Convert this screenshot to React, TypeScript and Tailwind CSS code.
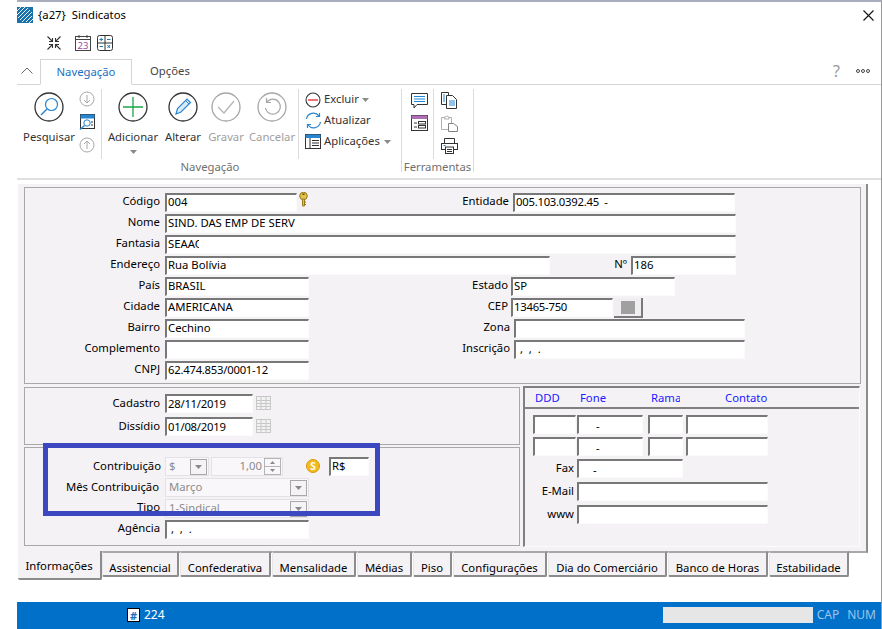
import type { ReactNode } from "react";
import { clsx } from "clsx";

const INPUT =
  "box-border h-[19px] shrink-0 overflow-hidden whitespace-pre border-t-2 border-l-2 border-r border-b border-t-[#787878] border-l-[#787878] border-r-[#fbfbfb] border-b-[#fbfbfb] bg-white pl-[1px] text-[11.3px] leading-[14px] text-black";

function Input({ className, children }: { className: string; children?: ReactNode }) {
  return <div className={clsx(INPUT, className)}>{children}</div>;
}

function Label({ className, children }: { className: string; children: ReactNode }) {
  return (
    <div className={clsx("h-[19px] shrink-0 whitespace-nowrap text-right text-[11.3px] leading-[16px] text-black", className)}>
      {children}
    </div>
  );
}

function Caret({ className }: { className?: string }) {
  return (
    <svg width="7" height="4" viewBox="0 0 7 4" className={className}>
      <path d="M0 0h7L3.5 4z" fill="#8a8a8a" />
    </svg>
  );
}

function Combo({ className, text }: { className: string; text: string }) {
  return (
    <div className={clsx("box-border flex h-[19px] shrink-0 items-center justify-between border border-[#e4e2e6] bg-[#f9f7fa] pl-[3px] pr-[1px] text-[11.3px] text-[#8c8c8c]", className)}>
      <span>{text}</span>
      <div className="flex h-[16px] w-[17px] items-center justify-center border border-[#a8a8a8] bg-[#f5f3f6]">
        <Caret />
      </div>
    </div>
  );
}

function CircleIcon({ children, muted }: { children: ReactNode; muted?: boolean }) {
  return (
    <svg width="30" height="30" viewBox="0 0 30 30" fill="none">
      <circle cx="15" cy="15" r="14" stroke={muted ? "#a6a6a6" : "#333333"} strokeWidth="1.3" />
      {children}
    </svg>
  );
}

function BigButton({ icon, text, className, muted, caret }: { icon: ReactNode; text: string; className: string; muted?: boolean; caret?: boolean }) {
  return (
    <div className={clsx("flex shrink-0 flex-col items-center pt-[3px]", className)}>
      {icon}
      <div className={clsx("mt-[6px] whitespace-nowrap text-[11.3px] leading-[18px]", muted ? "text-[#a0a0a0]" : "text-[#333333]")}>{text}</div>
      {caret && <Caret className="mt-[4px]" />}
    </div>
  );
}

function SmallCircle({ up }: { up?: boolean }) {
  return (
    <svg width="16" height="16" viewBox="0 0 16 16" fill="none" stroke="#a8a8a8" strokeWidth="1">
      <circle cx="8" cy="8" r="7" />
      {up ? <path d="M8 12V4M5 7l3-3 3 3" /> : <path d="M8 4v8M5 9l3 3 3-3" />}
    </svg>
  );
}

function CommandRow({ icon, text, caret }: { icon: ReactNode; text: string; caret?: string }) {
  return (
    <div className="flex h-[21px] items-center whitespace-nowrap text-[11.3px] text-[#333333]">
      <div className="flex w-[18px] justify-center">{icon}</div>
      <span className="ml-[2px]">{text}</span>
      {caret && <Caret className={caret} />}
    </div>
  );
}

function Tab({ className, children }: { className: string; children: string }) {
  return (
    <div className={clsx("box-border flex h-[26px] shrink-0 items-center justify-center rounded-b-[2px] border-t-2 border-l border-r-2 border-b-2 border-t-[#a8a8a8] border-l-[#e8e8e8] border-r-[#8c8c8c] border-b-[#8c8c8c] bg-[#f5f2f6] pt-[8px] text-[11.3px] text-black", className)}>
      {children}
    </div>
  );
}

function CalendarGrid() {
  return (
    <svg width="15" height="14" viewBox="0 0 15 14" className="ml-[3px] mt-[2px] shrink-0" fill="#f2f2f2" stroke="#c8c8c8">
      <rect x="0.5" y="0.5" width="14" height="13" />
      <path d="M0 4.5h15M0 7.5h15M0 10.5h15M5 1v13M10 1v13" />
    </svg>
  );
}

function Row({ children }: { children: ReactNode }) {
  return <div className="flex h-[21px] items-start">{children}</div>;
}

export default function App() {
  return (
    <div className="flex h-[629px] w-[882px] overflow-hidden bg-white font-['Noto_Sans','Open_Sans',sans-serif]">
      <div className="relative ml-[17px] flex h-full w-[865px] flex-col border-t-2 border-r border-t-[#a9adbd] border-r-[#9a9a9a]">
        {/* title */}
        <div className="flex h-[31px] shrink-0 items-center justify-between pr-[7px] pb-[5px]">
          <div className="flex items-center">
            <svg width="16" height="16" viewBox="0 0 16 16">
              <rect width="16" height="16" fill="#1a72ad" />
              <path d="M-1 5L5-1M-1 9L9-1M1 11L11 1M3 13L13 3M5 15L15 5M9 15l6-6M11 17l6-6" stroke="#fff" strokeWidth="0.9" />
            </svg>
            <span className="ml-[5px] text-[11.3px] text-black">{"{a27}"}</span>
            <span className="ml-[6px] text-[11.3px] text-black">Sindicatos</span>
          </div>
          <svg width="11" height="11" viewBox="0 0 11 11" stroke="#111" strokeWidth="1.1">
            <path d="M0.5 0.5l10 10M10.5 0.5l-10 10" />
          </svg>
        </div>

        {/* quick access */}
        <div className="flex h-[26px] shrink-0 items-center gap-[7px] pl-[30px] pb-[6px]">
          <svg width="14" height="14" viewBox="0 0 14 14" fill="none" stroke="#333" strokeWidth="1.1" className="mr-[2px]">
            <path d="M0.5 0.5L5.5 5.5M2 5.5h3.5V2M13.5 0.5L8.500 5.500M12 5.5H8.500V2M0.5 13.5L5.500 8.500M2 8.500h3.500V12M13.500 13.500L8.500 8.500M12 8.500H8.500V12" />
          </svg>
          <svg width="16" height="16" viewBox="0 0 16 16" fill="none" className="ml-[5px]">
            <rect x="0.5" y="1.500" width="15" height="14" stroke="#444" fill="#fff" />
            <path d="M0.500 4.500h15M4 0v3M12 0v3" stroke="#444" />
            <text x="8" y="13.500" textAnchor="middle" fontSize="9.500" fill="#a0479f" fontFamily="Noto Sans">23</text>
          </svg>
          <svg width="16" height="16" viewBox="0 0 16 16" fill="none" className="-ml-[1px]">
            <rect x="0.500" y="0.500" width="15" height="15" rx="2" stroke="#333" />
            <path d="M8 1v14M1 8h14" stroke="#333" />
            <path d="M2.500 4.500h3.500M4.200 2.800v3.400M10 4.500h3.500M2.500 11.500h3.500M10.500 10l2.500 3M13 10l-2.500 3" stroke="#1f78b4" />
          </svg>
        </div>

        {/* ribbon tabs */}
        <div className="flex h-[26px] shrink-0 items-end border-b border-b-[#d4d4d4]">
          <svg width="12" height="7" viewBox="0 0 12 7" fill="none" stroke="#666" className="mb-[10px] ml-[4px] mr-[7px]">
            <path d="M0.500 6.500L6 1l5.500 5.500" />
          </svg>
          <div className="-mb-px flex h-[26px] w-[92px] items-center justify-center border border-b-white border-[#d4d4d4] bg-white text-[11.3px] text-[#1c70c0]">
            Navegação
          </div>
          <div className="ml-[18px] pb-[3px] text-[11.3px] leading-[20px] text-[#444444]">Opções</div>
          <div className="ml-auto mb-[3px] mr-[16px] text-[16px] leading-[20px] text-[#9a9a9a]">?</div>
          <div className="mb-[11px] mr-[11px] flex gap-[1px]">
            <div className="h-[4px] w-[4px] rounded-full border border-[#444444]" />
            <div className="h-[4px] w-[4px] rounded-full border border-[#444444]" />
            <div className="h-[4px] w-[4px] rounded-full border border-[#444444]" />
          </div>
        </div>

        {/* ribbon */}
        <div className="flex h-[95px] shrink-0 border-b-2 border-b-[#e0e0e0] pt-[4px]">
          <div className="flex h-[83px] w-[385px] flex-col border-r border-r-[#dcdcdc]">
            <div className="flex h-[70px] shrink-0">
              <div className="flex w-[85px] border-r border-r-[#dcdcdc]">
                <BigButton
                  className="w-[61px] pl-[3px]"
                  text="Pesquisar"
                  icon={
                    <CircleIcon>
                      <circle cx="17.500" cy="12.500" r="6" stroke="#2a85d0" strokeWidth="1.200" />
                      <path d="M13 17l-6 6" stroke="#2a85d0" strokeWidth="1.500" />
                    </CircleIcon>
                  }
                />
                <div className="flex w-[18px] flex-col items-center gap-[7px] pt-[2px]">
                  <SmallCircle />
                  <svg width="16" height="16" viewBox="0 0 16 16" fill="none">
                    <rect x="1.500" y="0.500" width="14" height="14" stroke="#333" fill="#fff" />
                    <rect x="1.500" y="0.500" width="14" height="4" fill="#2a85d0" />
                    <circle cx="8" cy="9" r="3.200" stroke="#2a85d0" />
                    <path d="M5.500 11.500L1 15.500" stroke="#2a85d0" strokeWidth="1.300" />
                    <path d="M12 8h2M12 11h2" stroke="#333" />
                  </svg>
                  <SmallCircle up />
                </div>
              </div>
              <div className="flex w-[197px] border-r border-r-[#dcdcdc]">
                <BigButton
                  caret
                  className="w-[62px]"
                  text="Adicionar"
                  icon={
                    <CircleIcon>
                      <path d="M15 5v20M5 15h20" stroke="#1aa64a" strokeWidth="1.300" />
                    </CircleIcon>
                  }
                />
                <BigButton
                  className="ml-[2px] w-[34px]"
                  text="Alterar"
                  icon={
                    <CircleIcon>
                      <path d="M8 22l1.500-5.500L19 7l3.500 3.500L13 20z" stroke="#2a85d0" strokeWidth="1.200" fill="#d9eaf8" />
                      <path d="M17.500 8.500L21 12" stroke="#2a85d0" />
                    </CircleIcon>
                  }
                />
                <BigButton
                  muted
                  className="ml-[6px] w-[40px]"
                  text="Gravar"
                  icon={
                    <CircleIcon muted>
                      <path d="M7 15l6 6L23 9" stroke="#b4b4b4" strokeWidth="1.200" />
                    </CircleIcon>
                  }
                />
                <BigButton
                  muted
                  className="ml-[2px] w-[48px]"
                  text="Cancelar"
                  icon={
                    <CircleIcon muted>
                      <path d="M10 10a7.500 7.500 0 1 1-1.500 6M9.500 6v4.500H14" stroke="#a6a6a6" strokeWidth="1.200" />
                    </CircleIcon>
                  }
                />
              </div>
              <div className="flex flex-col pl-[5px]">
                <CommandRow
                  text="Excluir"
                  caret="ml-[3px]"
                  icon={
                    <svg width="16" height="16" viewBox="0 0 16 16" fill="none">
                      <circle cx="8" cy="8" r="7" stroke="#333" strokeWidth="1.100" />
                      <path d="M3 8h10" stroke="#e8232a" strokeWidth="1.300" />
                    </svg>
                  }
                />
                <CommandRow
                  text="Atualizar"
                  icon={
                    <svg width="17" height="17" viewBox="0 0 17 17" fill="none" stroke="#2a85d0" strokeWidth="1.200">
                      <path d="M1.500 7A7 7 0 0 1 14 4M11 4.500h3.500V1M15.500 10A7 7 0 0 1 3 13M6 12.500H2.500V16" />
                    </svg>
                  }
                />
                <CommandRow
                  text="Aplicações"
                  caret="ml-[4px]"
                  icon={
                    <svg width="16" height="15" viewBox="0 0 16 15" fill="none">
                      <rect x="0.500" y="0.500" width="15" height="14" stroke="#333" fill="#fff" />
                      <rect x="0.500" y="0.500" width="15" height="3.500" fill="#2a85d0" />
                      <path d="M5 4v10M7 6.500h7M7 9h7M7 11.500h7" stroke="#333" />
                    </svg>
                  }
                />
              </div>
            </div>
            <div className="mt-[1px] pl-[2px] text-center text-[11.3px] leading-[14px] text-[#707070]">Navegação</div>
          </div>
          <div className="flex h-[83px] w-[72px] flex-col border-r border-r-[#dcdcdc]">
            <div className="flex h-[70px] shrink-0">
              <div className="flex w-[32px] flex-col items-center gap-[6px] border-r border-r-[#dcdcdc] pl-[3px] pt-[4px]">
                <svg width="17" height="16" viewBox="0 0 17 16" fill="none">
                  <path d="M0.500 0.500h16v11H6l-3 3.500v-3.500H0.500z" stroke="#333" fill="#fff" />
                  <path d="M3 3.500h11M3 6h11M3 8.500h11" stroke="#1c86d8" />
                </svg>
                <svg width="17" height="16" viewBox="0 0 17 16" fill="none">
                  <rect x="0.500" y="0.500" width="16" height="15" stroke="#333" fill="#fff" />
                  <rect x="0.500" y="0.500" width="16" height="3.500" fill="#b06fb4" />
                  <path d="M3 8h3M3 12h3" stroke="#333" />
                  <rect x="7.500" y="6.500" width="7" height="2.500" stroke="#333" />
                  <rect x="7.500" y="10.500" width="7" height="2.500" stroke="#333" />
                </svg>
              </div>
              <div className="flex flex-1 flex-col items-center gap-[6px] pr-[9px] pt-[3px]">
                <svg width="17" height="17" viewBox="0 0 17 17" fill="none" stroke="#333">
                  <path d="M0.500 0.500h7v12h-7z" fill="#fff" />
                  <path d="M5.500 3.500h6l4 4v9h-10z" fill="#fff" />
                  <path d="M8 9h6M8 11h6M8 13h6" stroke="#1c86d8" />
                  <path d="M2 3h2M2 5h2M2 7h2M2 9h2" stroke="#1c86d8" />
                </svg>
                <svg width="17" height="17" viewBox="0 0 17 17" fill="none" stroke="#b0b0b0">
                  <path d="M0.500 2.500h10v12h-10z" />
                  <path d="M3.500 4V2h1.500a1 1 0 0 1 2 0h1v2z" fill="#fff" />
                  <path d="M7.500 8.500h5l4 3v5h-9z" fill="#fff" stroke="#808080" />
                </svg>
                <svg width="17" height="16" viewBox="0 0 17 16" fill="none" stroke="#333">
                  <path d="M3.500 5V0.500h10V5" />
                  <rect x="0.500" y="5.500" width="16" height="6" />
                  <rect x="4.500" y="9" width="8" height="6.500" fill="#fff" />
                  <path d="M2.500 7.500h2" stroke="#1c86d8" />
                  <path d="M6 11.500h5M6 13.500h5" />
                </svg>
              </div>
            </div>
            <div className="mt-[1px] whitespace-nowrap text-center text-[11.3px] leading-[14px] text-[#707070]">Ferramentas</div>
          </div>
        </div>

        {/* form */}
        <div className="mt-[4px] ml-[1px] box-border flex h-[369px] w-[850px] shrink-0 flex-col gap-[3px] border-r-2 border-b-2 border-r-[#8c8c8c] border-b-[#a8a8a8] bg-[#f5f2f6] pl-[6px] pr-[5px] pt-[3px]">
          <div className="box-border h-[197px] shrink-0 border border-[#a8a8a8] pt-[5px]">
            <Row>
              <Label className="w-[135px]">Código</Label>
              <Input className="ml-[5px] w-[132px]">004</Input>
              <svg width="9" height="15" viewBox="0 0 9 15" className="ml-[2px] -mt-[1px]">
                <circle cx="4.500" cy="4" r="3.800" fill="#e3c24a" stroke="#9a7a1a" />
                <rect x="3.500" y="1.500" width="2" height="1.500" fill="#5a4a10" />
                <path d="M3.500 7h2v7h-2zM5.500 10h1.500M5.500 12.500h1.500" fill="#e3c24a" stroke="#9a7a1a" />
              </svg>
              <Label className="w-[201px]">Entidade</Label>
              <Input className="ml-[4px] w-[222px] tracking-[-0.25px]">{"005.103.0392.45  -"}</Input>
            </Row>
            <Row>
              <Label className="w-[135px]">Nome</Label>
              <Input className="ml-[5px] w-[571px]">SIND. DAS EMP DE SERV</Input>
            </Row>
            <Row>
              <Label className="w-[135px]">Fantasia</Label>
              <Input className="ml-[5px] w-[571px]">
                <div className="w-[31px] overflow-hidden">SEAAC</div>
              </Input>
            </Row>
            <Row>
              <Label className="w-[135px]">Endereço</Label>
              <Input className="ml-[5px] w-[385px]">Rua Bolívia</Input>
              <Label className="w-[77px]">Nº</Label>
              <Input className="ml-[4px] w-[105px]">186</Input>
            </Row>
            <Row>
              <Label className="w-[135px]">País</Label>
              <Input className="ml-[5px] w-[144px]">BRASIL</Input>
              <Label className="w-[199px]">Estado</Label>
              <Input className="ml-[3px] w-[164px]">SP</Input>
            </Row>
            <Row>
              <Label className="w-[135px]">Cidade</Label>
              <Input className="ml-[5px] w-[144px]">AMERICANA</Input>
              <Label className="w-[199px]">CEP</Label>
              <Input className="ml-[3px] w-[102px] tracking-[-0.25px]">13465-750</Input>
              <div className="ml-[1px] flex h-[20px] w-[29px] items-center justify-center border-r-2 border-b-2 border-r-[#7a7a7a] border-b-[#7a7a7a] bg-[#f0eef1]">
                <div className="h-[13px] w-[14px] bg-[#a0a0a0]" />
              </div>
            </Row>
            <Row>
              <Label className="w-[135px]">Bairro</Label>
              <Input className="ml-[5px] w-[144px]">Cechino</Input>
              <Label className="w-[201px]">Zona</Label>
              <Input className="ml-[4px] w-[231px]" />
            </Row>
            <Row>
              <Label className="w-[135px]">Complemento</Label>
              <Input className="ml-[5px] w-[144px]" />
              <Label className="w-[201px]">Inscrição</Label>
              <Input className="ml-[4px] w-[231px]">{" ,  ,  ."}</Input>
            </Row>
            <Row>
              <Label className="w-[135px]">CNPJ</Label>
              <Input className="ml-[5px] w-[144px] tracking-[-0.25px]">62.474.853/0001-12</Input>
            </Row>
          </div>

          <div className="flex gap-[3px]">
            <div className="flex w-[496px] shrink-0 flex-col gap-[2px]">
              <div className="box-border flex h-[58px] flex-col gap-[3px] border border-[#a8a8a8] pt-[6px]">
                <div className="flex">
                  <Label className="mt-[1px] w-[135px]">Cadastro</Label>
                  <Input className="ml-[5px] w-[88px] pt-[1px] tracking-[-0.25px]">28/11/2019</Input>
                  <CalendarGrid />
                </div>
                <div className="flex">
                  <Label className="mt-[1px] w-[135px]">Dissídio</Label>
                  <Input className="ml-[5px] w-[88px] pt-[1px] tracking-[-0.25px]">01/08/2019</Input>
                  <CalendarGrid />
                </div>
              </div>
              <div className="box-border flex h-[99px] flex-col gap-[1px] border border-[#a8a8a8] pt-[9px]">
                <div className="flex">
                  <Label className="mt-[1px] w-[136px]">Contribuição</Label>
                  <Combo className="ml-[4px] w-[44px]" text="$" />
                  <div className="ml-[2px] flex h-[19px] w-[72px] items-center justify-end border border-[#e4e2e6] bg-[#f9f7fa] pr-[1px] text-[11.3px] text-[#8c8c8c]">
                    <span className="mr-[2px]">1,00</span>
                    <div className="flex h-[17px] w-[17px] flex-col border border-[#b4b4b4]">
                      <div className="flex flex-1 items-center justify-center border-b border-b-[#b4b4b4]">
                        <svg width="5" height="3" viewBox="0 0 5 3"><path d="M0 3h5L2.500 0z" fill="#8a8a8a" /></svg>
                      </div>
                      <div className="flex flex-1 items-center justify-center">
                        <svg width="5" height="3" viewBox="0 0 5 3"><path d="M0 0h5L2.500 3z" fill="#8a8a8a" /></svg>
                      </div>
                    </div>
                  </div>
                  <div className="ml-[23px] mt-[2px] flex h-[14px] w-[14px] items-center justify-center rounded-full border border-[#d99a0a] bg-[#f3bb1c] text-[10px] font-bold leading-none text-white">
                    S
                  </div>
                  <Input className="ml-[9px] w-[40px]">R$</Input>
                </div>
                <div className="flex">
                  <Label className="mt-[1px] w-[134px]">Mês Contribuição</Label>
                  <Combo className="ml-[6px] w-[144px]" text="Março" />
                </div>
                <div className="flex">
                  <Label className="w-[135px]">Tipo</Label>
                  <Combo className="ml-[5px] w-[144px]" text="1-Sindical" />
                </div>
                <div className="mt-[1px] flex">
                  <Label className="w-[135px]">Agência</Label>
                  <Input className="ml-[5px] w-[144px]">{" ,  ,  ."}</Input>
                </div>
              </div>
            </div>
            <div className="-mt-[1px] box-border flex h-[161px] w-[337px] shrink-0 flex-col border-t-2 border-l-2 border-r border-b border-t-[#808080] border-l-[#808080] border-r-[#fbfbfb] border-b-[#fbfbfb]">
              <div className="flex h-[21px] shrink-0 items-center border-b-2 border-b-[#808080] pt-[1px] text-[11.3px] text-[#1a1aff]">
                <span className="ml-[10px] w-[21px]">DDD</span>
                <span className="ml-[24px] w-[25px]">Fone</span>
                <span className="ml-[46px] w-[29px] overflow-hidden">Rama</span>
                <span className="ml-[45px]">Contato</span>
              </div>
              <div className="flex flex-col gap-[3px] pt-[6px]">
                <div className="flex">
                  <Input className="ml-[8px] w-[43px]" />
                  <Input className="ml-[1px] w-[66px] pl-[17px] pt-[2px]">-</Input>
                  <Input className="ml-[5px] w-[35px]" />
                  <Input className="ml-[3px] w-[82px]" />
                </div>
                <div className="flex">
                  <Input className="ml-[8px] w-[43px]" />
                  <Input className="ml-[1px] w-[66px] pl-[17px] pt-[2px]">-</Input>
                  <Input className="ml-[5px] w-[35px]" />
                  <Input className="ml-[3px] w-[82px]" />
                </div>
                <div className="flex">
                  <Label className="mt-[1px] w-[49px]">Fax</Label>
                  <Input className="ml-[3px] w-[106px] pl-[14px] pt-[2px]">-</Input>
                </div>
                <div className="flex">
                  <Label className="mt-[1px] w-[49px]">E-Mail</Label>
                  <Input className="ml-[3px] w-[191px]" />
                </div>
                <div className="flex">
                  <Label className="mt-[1px] w-[49px]">www</Label>
                  <Input className="ml-[3px] w-[191px]" />
                </div>
              </div>
            </div>
          </div>
        </div>

        {/* bottom tabs */}
        <div className="ml-[1px] flex shrink-0 items-start">
          <div className="-mt-[2px] box-border flex h-[29px] w-[84px] shrink-0 items-center justify-center rounded-b-[2px] border-r-2 border-b-2 border-r-[#8c8c8c] border-b-[#8c8c8c] bg-[#f5f2f6] pt-[4px] text-[11.3px] text-black">
            Informações
          </div>
          <div className="-mt-[2px] flex gap-[1px]">
            <Tab className="w-[77px]">Assistencial</Tab>
            <Tab className="w-[91px]">Confederativa</Tab>
            <Tab className="w-[84px]">Mensalidade</Tab>
            <Tab className="w-[55px]">Médias</Tab>
            <Tab className="w-[39px]">Piso</Tab>
            <Tab className="w-[94px]">Configurações</Tab>
            <Tab className="w-[119px]">Dia do Comerciário</Tab>
            <Tab className="w-[100px]">Banco de Horas</Tab>
            <Tab className="w-[80px]">Estabilidade</Tab>
          </div>
        </div>

        {/* status bar */}
        <div className="mt-auto flex h-[27px] shrink-0 items-center bg-[#0070c8] pb-[1px] text-[12px]">
          <div className="ml-[110px] flex h-[14px] w-[13px] items-center justify-center border border-black bg-white text-[11px] font-bold leading-none text-[#1c70c0]">
            #
          </div>
          <span className="ml-[4px] text-white">224</span>
          <div className="ml-auto h-[16px] w-[150px] bg-[#e6e6e6]" />
          <span className="ml-[4px] text-[#9cc4e8]">CAP</span>
          <span className="ml-[8px] mr-[5px] text-[#9cc4e8]">NUM</span>
        </div>

        {/* highlight */}
        <div className="absolute left-[26px] top-[441px] h-[73px] w-[337px] border-[5px] border-[#3b48c0]" />
      </div>
    </div>
  );
}
